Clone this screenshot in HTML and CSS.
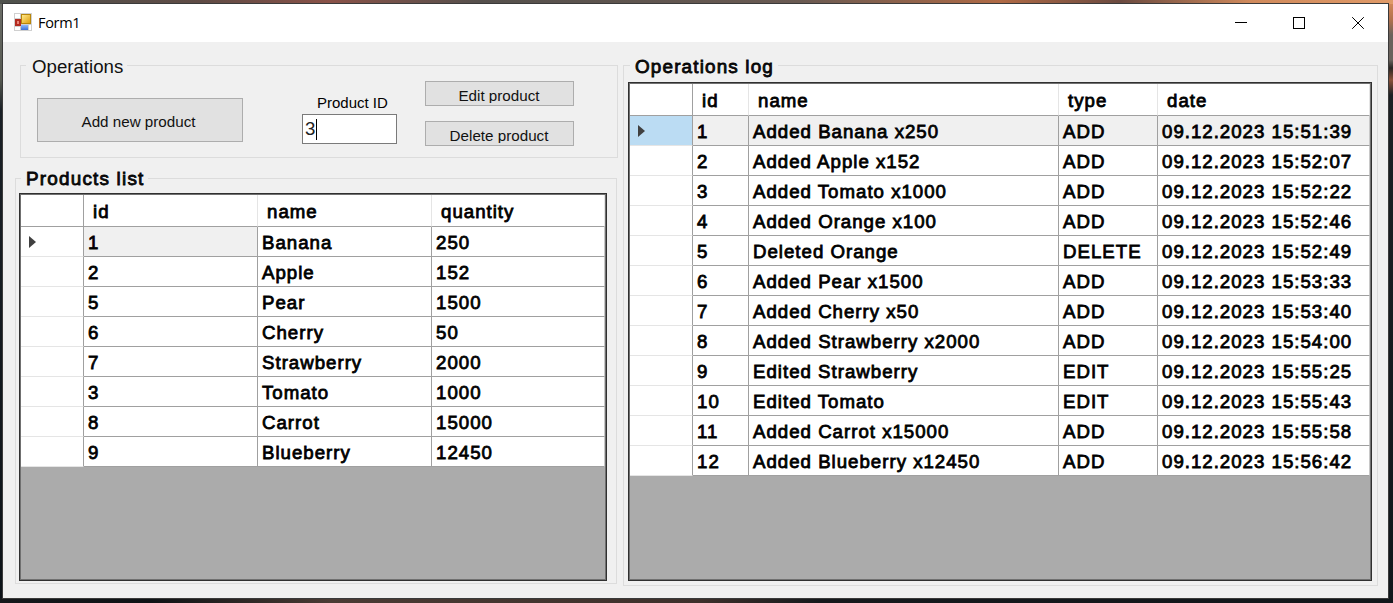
FILE: index.html
```html
<!DOCTYPE html>
<html lang="en">
<head>
<meta charset="utf-8">
<title>Form1</title>
<link rel="stylesheet" href="styles.css">
</head>
<body>
<div class="window">
  <header class="titlebar">
    <svg class="app-icon" width="18" height="18" viewBox="0 0 18 18">
      <defs>
        <linearGradient id="gold" x2="1" y2="1"><stop offset="0" stop-color="#ffe88a"/><stop offset="1" stop-color="#e0a010"/></linearGradient>
        <linearGradient id="blue" x2="0" y2="1"><stop offset="0" stop-color="#8db8ff"/><stop offset="1" stop-color="#3c70d8"/></linearGradient>
      </defs>
      <rect width="18" height="18" fill="#d0d0d0"/>
      <path d="M1 1h5v4H1zM1 14h5v3H1zM15 12h2v5h-2z" fill="#fff"/>
      <rect x="1" y="6" width="6" height="7" fill="#b32b20"/>
      <rect x="3" y="8" width="2" height="3" fill="#e88478"/>
      <rect x="7" y="1" width="10" height="10" fill="#b8860b"/>
      <rect x="8" y="2" width="8" height="8" fill="url(#gold)"/>
      <rect x="7" y="12" width="7" height="5" fill="url(#blue)"/>
    </svg>
    <span class="caption">Form1</span>
    <svg class="controls" width="130" height="14" viewBox="0 0 130 14" fill="none" stroke="#000" stroke-width="1">
      <path d="M0 6.500h12"/>
      <rect x="58.500" y="1.500" width="11" height="11"/>
      <path d="M117.200 1.200l11.600 11.600M128.800 1.200l-11.600 11.600"/>
    </svg>
  </header>
  <main class="client">
    <div class="left">
      <fieldset class="group operations">
        <legend>Operations</legend>
        <div class="ops">
          <button class="btn add">Add new product</button>
          <div class="field">
            <label>Product ID</label>
            <div class="input"><span>3</span><i class="caret"></i></div>
          </div>
          <div class="actions">
            <button class="btn small"><span>Edit product</span></button>
            <button class="btn small"><span>Delete product</span></button>
          </div>
        </div>
      </fieldset>
      <fieldset class="group bold products">
        <legend>Products list</legend>
        <div class="sheet">
          <div class="row head"><b></b><span>id</span><span>name</span><span>quantity</span></div>
          <div class="row"><b><i class="arrow"></i></b><span class="shade">1</span><span>Banana</span><span>250</span></div>
          <div class="row"><b></b><span>2</span><span>Apple</span><span>152</span></div>
          <div class="row"><b></b><span>5</span><span>Pear</span><span>1500</span></div>
          <div class="row"><b></b><span>6</span><span>Cherry</span><span>50</span></div>
          <div class="row"><b></b><span>7</span><span>Strawberry</span><span>2000</span></div>
          <div class="row"><b></b><span>3</span><span>Tomato</span><span>1000</span></div>
          <div class="row"><b></b><span>8</span><span>Carrot</span><span>15000</span></div>
          <div class="row"><b></b><span>9</span><span>Blueberry</span><span>12450</span></div>
        </div>
      </fieldset>
    </div>
    <fieldset class="group bold log">
      <legend>Operations log</legend>
      <div class="sheet">
        <div class="row head"><b></b><span>id</span><span>name</span><span>type</span><span>date</span></div>
        <div class="row current"><b><i class="arrow"></i></b><span>1</span><span>Added Banana x250</span><span>ADD</span><span>09.12.2023 15:51:39</span></div>
        <div class="row"><b></b><span>2</span><span>Added Apple x152</span><span>ADD</span><span>09.12.2023 15:52:07</span></div>
        <div class="row"><b></b><span>3</span><span>Added Tomato x1000</span><span>ADD</span><span>09.12.2023 15:52:22</span></div>
        <div class="row"><b></b><span>4</span><span>Added Orange x100</span><span>ADD</span><span>09.12.2023 15:52:46</span></div>
        <div class="row"><b></b><span>5</span><span>Deleted Orange</span><span>DELETE</span><span>09.12.2023 15:52:49</span></div>
        <div class="row"><b></b><span>6</span><span>Added Pear x1500</span><span>ADD</span><span>09.12.2023 15:53:33</span></div>
        <div class="row"><b></b><span>7</span><span>Added Cherry x50</span><span>ADD</span><span>09.12.2023 15:53:40</span></div>
        <div class="row"><b></b><span>8</span><span>Added Strawberry x2000</span><span>ADD</span><span>09.12.2023 15:54:00</span></div>
        <div class="row"><b></b><span>9</span><span>Edited Strawberry</span><span>EDIT</span><span>09.12.2023 15:55:25</span></div>
        <div class="row"><b></b><span>10</span><span>Edited Tomato</span><span>EDIT</span><span>09.12.2023 15:55:43</span></div>
        <div class="row"><b></b><span>11</span><span>Added Carrot x15000</span><span>ADD</span><span>09.12.2023 15:55:58</span></div>
        <div class="row"><b></b><span>12</span><span>Added Blueberry x12450</span><span>ADD</span><span>09.12.2023 15:56:42</span></div>
      </div>
    </fieldset>
  </main>
</div>
</body>
</html>
```
FILE: styles.css
```css
* { box-sizing: border-box; }
body {
  margin: 0;
  width: 1393px;
  height: 603px;
  padding: 3px 4px 4px 2px;
  overflow: hidden;
  font-family: "Liberation Sans", Arial, sans-serif;
  font-size: 18.67px;
  color: #000;
  background:
    linear-gradient(90deg, #4f524d 0, #5f4b45 200px, #8a5248 330px, #55504c 480px, #6a5a52 800px, #b06a45 1000px, #6b4a40 1120px, #d08a5c 1250px, #e09a68 1393px) 0 0 / 100% 4px no-repeat,
    linear-gradient(90deg, #15181b 0, #0e1215 150px, #4a3b34 330px, #3d302b 700px, #15191c 820px, #11161a 1393px) 0 598px / 100% 5px no-repeat,
    linear-gradient(#6d6f69 0, #555850 80px, #1a2026 110px, #0d1318 603px) 0 0 / 4px 100% no-repeat,
    linear-gradient(#d88b5a 0, #b0714e 20px, #6a625c 35px, #6a625c 60px, #2a2523 68px, #8a5038 80px, #1c2024 95px, #11171b 603px) 1387px 0 / 6px 100% no-repeat;
}
.window {
  width: 1387px;
  height: 596px;
  border: 1px solid #3a3a3a;
  background: #f0f0f0;
}
.titlebar {
  display: flex;
  align-items: center;
  height: 38px;
  padding: 0 23px 0 11px;
  background: #fff;
}
.app-icon { margin-top: -2px; }
.caption {
  margin-left: 6px;
  font: 14.5px/20px "Open Sans", sans-serif;
  letter-spacing: -0.3px;
}
.controls { margin-left: auto; }
.client {
  display: flex;
  align-items: flex-start;
  gap: 5px;
  padding: 12px 0 0 12px;
}
.left { width: 603px; }
.group {
  min-width: 0;
  margin: 0;
  padding: 0;
  border: 1px solid #dcdcdc;
}
.group legend {
  height: 23px;
  padding: 0 4px 0 5px;
  margin-left: 5px;
  line-height: 24px;
  color: #111;
}
.bold {
  letter-spacing: 1px;
  -webkit-text-stroke: 0.8px #000;
}
.operations { width: 598px; height: 104px; margin-left: 5px; }
.operations legend { padding-left: 6px; line-height: 26px; }
.products { width: 602px; height: 417px; margin-top: 9px; padding: 3px 0 0 3px; }
.products legend { margin-left: 2px; font-size: 18.9px; letter-spacing: 1.2px; line-height: 23px; }
.log { width: 755px; height: 532px; padding: 5px 0 0 4px; }
.log legend { margin-left: 2px; font-size: 18.9px; letter-spacing: 1.15px; line-height: 26px; }

.ops { display: flex; padding-left: 16px; }
.btn {
  display: block;
  padding: 0;
  border: 1px solid #adadad;
  background: #e1e1e1;
  font: 15.2px/20px "Liberation Sans", Arial, sans-serif;
  color: #111;
}
.add { width: 206px; height: 44px; margin-top: 21px; padding-top: 3px; padding-right: 3px; }
.field { width: 95px; margin: 16px 0 0 59px; }
.field label {
  display: block;
  height: 21px;
  padding-left: 15px;
  font-size: 15px;
  line-height: 19px;
  white-space: nowrap;
}
.input {
  display: flex;
  align-items: center;
  height: 30px;
  padding-left: 2px;
  border: 1px solid #7a7a7a;
  background: #fff;
  color: #222;
}
.input span { width: 11px; }
.caret { width: 1px; height: 21px; background: #000; }
.actions { display: flex; flex-direction: column; gap: 15px; margin: 4px 0 0 28px; }
.small { width: 149px; height: 25px; }
.small span { display: block; height: 16px; margin-top: 3px; padding-right: 1px; overflow: hidden; line-height: 18px; }

.sheet {
  border: 1px solid #303030;
  outline: 1px solid #707070;
  outline-offset: -2px;
  padding: 1px;
  background: #ababab;
}
.products .sheet { width: 588px; height: 388px; }
.log .sheet { width: 744px; height: 499px; }
.row { display: grid; height: 30px; line-height: 31px; background: #fff; }
.products .row { grid-template-columns: 63px 174px 174px 173px; }
.log .row { grid-template-columns: 63px 56px 310px 99px 212px; }
.row > b, .row > span {
  border-right: 1px solid #a0a0a0;
  border-bottom: 1px solid #a0a0a0;
}
.row > span { padding-left: 4px; white-space: nowrap; overflow: hidden; }
.row > span:last-child { border-right-color: #c8c8c8; }
.row > b { border-bottom-color: #e5e5e5; padding: 9px 0 0 8px; }
.head { height: 32px; line-height: 33px; }
.head > b { border-bottom-color: #a0a0a0; }
.row.head > span { padding-left: 9px; border-right-color: #e5e5e5; }
.shade, .current > span { background: #f0f0f0; }
.row.current > b { background: #bbdcf3; }
.arrow {
  display: block;
  width: 0;
  height: 0;
  border: 6px solid transparent;
  border-left: 7px solid #404040;
  border-right: 0;
}
```
